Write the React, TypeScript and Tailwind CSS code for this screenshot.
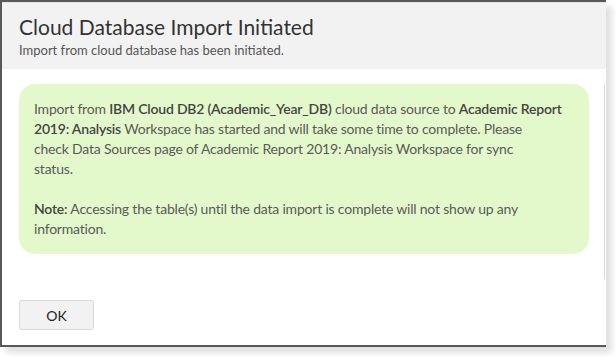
const font = { fontFamily: 'Lato, "Open Sans", sans-serif' };

function ImportDialog() {
  return (
    <div className="relative flex h-[347px] w-[606px] flex-col border-y-2 border-l-2 border-[#58585a] bg-white shadow-[6px_6px_6px_rgba(0,0,0,0.12)]">
      <div className="h-[67px] border-t border-[#e6e6e6] bg-[#f2f2f2] pl-[17px] pt-[11px]">
        <h1 className="text-[21px] leading-[26px] text-[#333]">Cloud Database Import Initiated</h1>
        <p className="mt-[2px] text-[13px] leading-[16px] text-[#555]">Import from cloud database has been initiated.</p>
      </div>
      <div className="flex flex-1 flex-col px-[17px] pt-[15px]">
        <div className="rounded-[16px] bg-[#e3f9cb] px-[15px] py-[15px] text-[14px] leading-[20px] tracking-[-0.2px] text-[#5a5a5a]">
          <p>
            Import from <span className="font-semibold text-[#444]">IBM Cloud DB2 (Academic_Year_DB)</span> cloud data
            source to <span className="font-semibold text-[#444]">Academic Report 2019: Analysis</span> Workspace has
            started and will take some time to complete. Please
            <br />
            check Data Sources page of Academic Report 2019: Analysis Workspace for sync
            <br />
            status.
          </p>
          <p className="mt-[20px]">
            <span className="font-semibold text-[#444]">Note:</span> Accessing the table(s) until the data import is
            complete will not show up any information.
          </p>
        </div>
        <div className="mt-[46px]">
          <button className="h-[30px] w-[75px] rounded-[3px] border border-[#d9d9d9] bg-[#f2f2f2] text-[14px] text-[#222]">
            OK
          </button>
        </div>
      </div>
      <div className="absolute right-[1px] top-[81px] h-[196px] w-px bg-[#dcdcdc]" />
    </div>
  );
}

export default function App() {
  return (
    <div className="h-[357px] w-[616px] overflow-hidden bg-white" style={font}>
      <ImportDialog />
    </div>
  );
}
